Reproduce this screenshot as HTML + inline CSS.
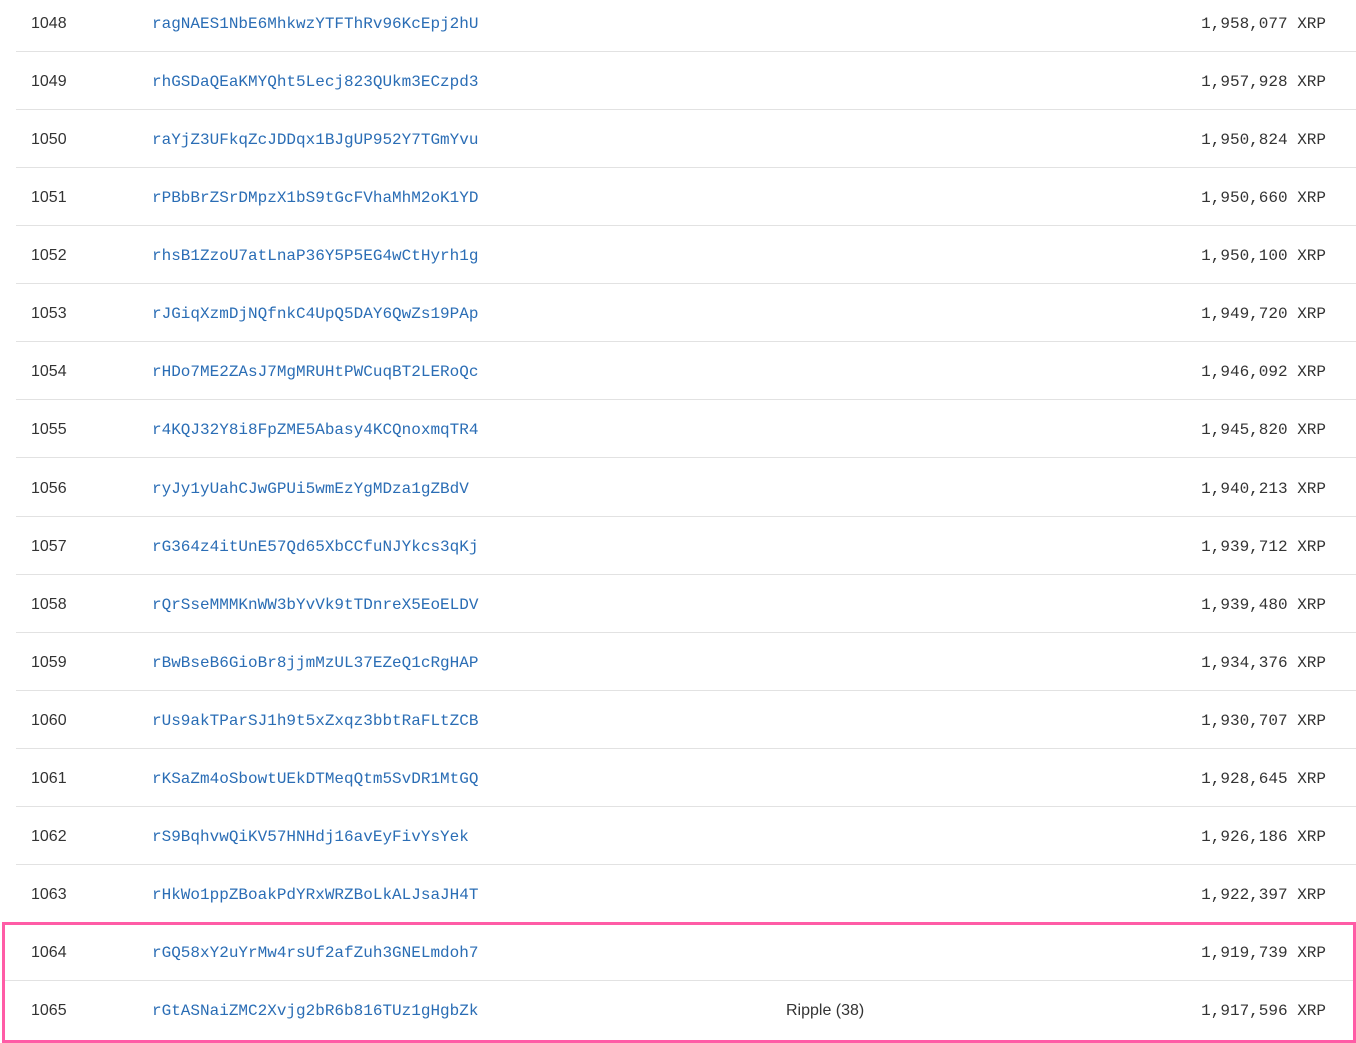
<!DOCTYPE html>
<html><head><style>
body{margin:0;width:1356px;height:1043px;background:#fff;position:relative;overflow:hidden;font-family:"Liberation Sans",sans-serif}
.r{position:absolute;left:16px;width:1340px;height:58px;border-bottom:1px solid #e2e2e2;box-sizing:border-box}
.n{position:absolute;left:15px;top:20px;font-size:16px;color:#333;line-height:20px}
.a{position:absolute;left:136px;top:20px;font-family:"Liberation Mono",monospace;font-size:16px;color:#2a6db5;line-height:20px}
.v{position:absolute;right:30px;top:20px;font-family:"Liberation Mono",monospace;font-size:16px;color:#333;line-height:20px}
.t{position:absolute;left:770px;top:20px;font-size:16px;color:#333;line-height:20px}
.box{position:absolute;left:2px;top:922px;width:1354px;height:121px;border:3px solid #ff5ca6;box-sizing:border-box}
</style></head><body>
<div class="r" style="top:-6px"><span class="n">1048</span><span class="a">ragNAES1NbE6MhkwzYTFThRv96KcEpj2hU</span><span class="v">1,958,077 XRP</span></div>
<div class="r" style="top:52px"><span class="n">1049</span><span class="a">rhGSDaQEaKMYQht5Lecj823QUkm3ECzpd3</span><span class="v">1,957,928 XRP</span></div>
<div class="r" style="top:110px"><span class="n">1050</span><span class="a">raYjZ3UFkqZcJDDqx1BJgUP952Y7TGmYvu</span><span class="v">1,950,824 XRP</span></div>
<div class="r" style="top:168px"><span class="n">1051</span><span class="a">rPBbBrZSrDMpzX1bS9tGcFVhaMhM2oK1YD</span><span class="v">1,950,660 XRP</span></div>
<div class="r" style="top:226px"><span class="n">1052</span><span class="a">rhsB1ZzoU7atLnaP36Y5P5EG4wCtHyrh1g</span><span class="v">1,950,100 XRP</span></div>
<div class="r" style="top:284px"><span class="n">1053</span><span class="a">rJGiqXzmDjNQfnkC4UpQ5DAY6QwZs19PAp</span><span class="v">1,949,720 XRP</span></div>
<div class="r" style="top:342px"><span class="n">1054</span><span class="a">rHDo7ME2ZAsJ7MgMRUHtPWCuqBT2LERoQc</span><span class="v">1,946,092 XRP</span></div>
<div class="r" style="top:400px"><span class="n">1055</span><span class="a">r4KQJ32Y8i8FpZME5Abasy4KCQnoxmqTR4</span><span class="v">1,945,820 XRP</span></div>
<div class="r" style="top:459px"><span class="n">1056</span><span class="a">ryJy1yUahCJwGPUi5wmEzYgMDza1gZBdV</span><span class="v">1,940,213 XRP</span></div>
<div class="r" style="top:517px"><span class="n">1057</span><span class="a">rG364z4itUnE57Qd65XbCCfuNJYkcs3qKj</span><span class="v">1,939,712 XRP</span></div>
<div class="r" style="top:575px"><span class="n">1058</span><span class="a">rQrSseMMMKnWW3bYvVk9tTDnreX5EoELDV</span><span class="v">1,939,480 XRP</span></div>
<div class="r" style="top:633px"><span class="n">1059</span><span class="a">rBwBseB6GioBr8jjmMzUL37EZeQ1cRgHAP</span><span class="v">1,934,376 XRP</span></div>
<div class="r" style="top:691px"><span class="n">1060</span><span class="a">rUs9akTParSJ1h9t5xZxqz3bbtRaFLtZCB</span><span class="v">1,930,707 XRP</span></div>
<div class="r" style="top:749px"><span class="n">1061</span><span class="a">rKSaZm4oSbowtUEkDTMeqQtm5SvDR1MtGQ</span><span class="v">1,928,645 XRP</span></div>
<div class="r" style="top:807px"><span class="n">1062</span><span class="a">rS9BqhvwQiKV57HNHdj16avEyFivYsYek</span><span class="v">1,926,186 XRP</span></div>
<div class="r" style="top:865px"><span class="n">1063</span><span class="a">rHkWo1ppZBoakPdYRxWRZBoLkALJsaJH4T</span><span class="v">1,922,397 XRP</span></div>
<div class="r" style="top:923px;left:5px;width:1348px"><span class="n" style="left:26px">1064</span><span class="a" style="left:147px">rGQ58xY2uYrMw4rsUf2afZuh3GNELmdoh7</span><span class="v" style="right:27px">1,919,739 XRP</span></div>
<div class="r" style="top:981px;left:5px;width:1348px;border-bottom:none"><span class="n" style="left:26px">1065</span><span class="a" style="left:147px">rGtASNaiZMC2Xvjg2bR6b816TUz1gHgbZk</span><span class="t" style="left:781px">Ripple (38)</span><span class="v" style="right:27px">1,917,596 XRP</span></div>
<div class="box"></div>
</body></html>
